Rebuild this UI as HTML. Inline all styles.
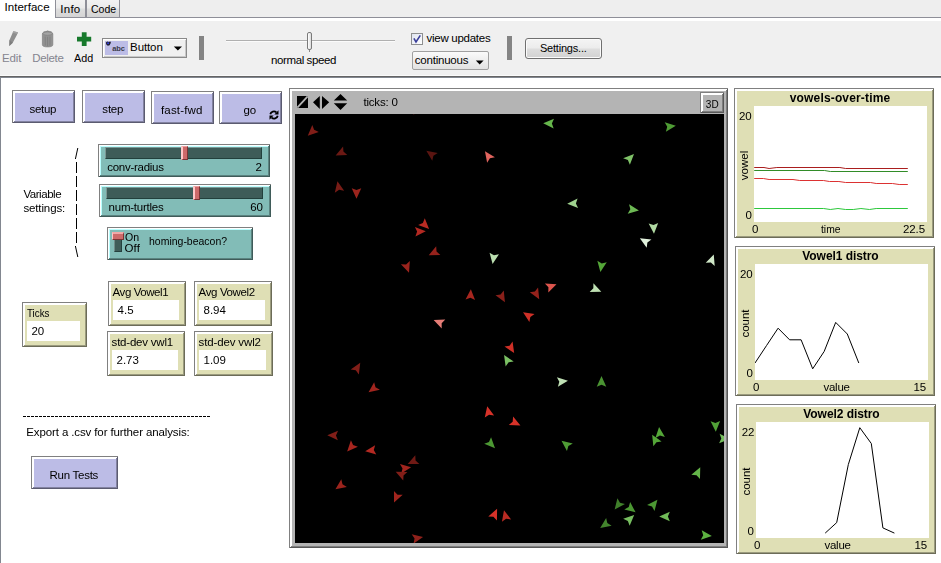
<!DOCTYPE html>
<html><head><meta charset="utf-8"><title>NetLogo</title>
<style>
html,body{margin:0;padding:0;}
body{width:941px;height:563px;overflow:hidden;background:#fff;position:relative;
 font-family:"Liberation Sans",sans-serif;font-size:11.5px;color:#000;line-height:1;}
div,span,svg{position:absolute;box-sizing:border-box;}
.t{white-space:nowrap;line-height:13px;height:13px;}
/* top chrome */
#tabbg{left:0;top:0;width:941px;height:18px;background:#eeeeee;}
#tabline{left:55px;top:17px;width:886px;height:1px;background:#8e8f98;}
#strip{left:0;top:18px;width:941px;height:3px;background:#fff;}
#tool{left:0;top:21px;width:941px;height:55px;background:#f0f0f0;}
#tl0{left:0;top:75px;width:941px;height:1px;background:#fafafa;}
#tl1{left:0;top:76px;width:941px;height:1px;background:#646464;}
#tl2{left:0;top:77px;width:941px;height:1px;background:#828790;}
#seltab{left:0;top:0;width:55px;height:21px;background:#fff;}
.tab{top:0;height:17px;border-left:1px solid #8e8f98;border-right:1px solid #8e8f98;
 background:linear-gradient(#f2f2f2 0%,#ebebeb 45%,#dddddd 55%,#d4d4d4 100%);}
#leftedge{left:0;top:78px;width:1px;height:485px;background:#828790;}
.sep{width:5px;background:#848484;}
/* generic netlogo widget */
.w{border-style:solid;border-width:0;}
.w>.g{left:0;top:0;right:0;bottom:0;border-top:1px solid #808080;border-left:1px solid #808080;}
.w>.s1{left:1px;top:1px;right:0;bottom:0;}
.w>.h1{left:1px;top:1px;right:1px;bottom:1px;}
.w>.s2{left:2px;top:2px;right:1px;bottom:1px;}
.w>.h2{left:2px;top:2px;right:2px;bottom:2px;}
.w>.f{left:3px;top:3px;right:2px;bottom:2px;}
.btn .h1,.btn .h2{background:#fff;}
.btn .s1{background:#5b5b70;} .btn .s2{background:#8383a1;} .btn .f{background:#bcbce6;}
.sld .h1{background:#fff;} .sld .h2{background:#b9ffff;}
.sld .s1{background:#3f5b59;} .sld .s2{background:#5b8380;} .sld .f{background:#82bcb7;}
.mon .h1,.mon .h2{background:#fff;}
.mon .s1{background:#6c6c58;} .mon .s2{background:#9b9b7e;} .mon .f{background:#dfdfb5;}
.vw .h1,.vw .h2{background:#fff;}
.vw .s1{background:#585858;} .vw .s2{background:#7e7e7e;} .vw .f{background:#b4b4b4;}
.lbl{text-align:center;left:0;right:0;}
.white{background:#fff;}
.bold{font-weight:bold;}
</style></head>
<body>
<div id="tabbg"></div><div id="strip"></div><div id="tool"></div><div id="tl0"></div><div id="tl1"></div><div id="tl2"></div>
<div id="seltab"></div>
<div class="tab" style="left:55px;width:31px"></div><div class="tab" style="left:86px;width:34px"></div>
<div id="tabline"></div>
<span class="t " style="left:4.50px;top:0.80px;;letter-spacing:0.039px">Interface</span>
<span class="t " style="left:60.30px;top:2.80px;;letter-spacing:0.253px">Info</span>
<span class="t " style="left:91.20px;top:2.80px;;transform:scaleX(0.9164);transform-origin:0 0">Code</span>
<svg style="left:6px;top:29px" width="16" height="20" viewBox="0 0 16 20"><path d="M7.3 2.2 L11.9 3.3 L11 5.8 L6.75 13.8 L3.3 16.9 L3.5 10.9 Z" fill="#8e8e8e"/><path d="M7.3 2.2 L11.9 3.3 L11.3 4.9 L6.7 3.7 Z" fill="#a2a2a2"/><path d="M3.5 10.9 L6.75 13.8 L3.3 16.9 Z" fill="#7e7e7e"/></svg>
<svg style="left:40px;top:29px" width="16" height="20" viewBox="0 0 16 20"><path d="M2.4 5.2 Q2.4 2.3 7.6 2.3 Q12.8 2.3 12.8 5.2 L12.8 15.8 Q12.8 17.9 7.6 17.9 Q2.4 17.9 2.4 15.8 Z" fill="#929292" stroke="#808080" stroke-width="0.7"/><ellipse cx="7.6" cy="4.6" rx="4.6" ry="1.7" fill="#a4a4a4" stroke="#7e7e7e" stroke-width="0.6"/><path d="M6.2 2.6 Q7.6 1.4 9 2.6" fill="none" stroke="#858585" stroke-width="0.9"/><path d="M5.2 7.6 L5.3 16.6 M7.6 7.8 L7.6 17 M10 7.6 L9.9 16.6" stroke="#7c7c7c" stroke-width="0.8" fill="none"/></svg>
<svg style="left:76px;top:31px" width="16" height="16" viewBox="0 0 16 16"><path d="M5.8 1.2 H10.6 V5.8 H15.2 V10.4 H10.6 V15 H5.8 V10.4 H1 V5.8 H5.8 Z" fill="#17792c"/></svg>
<span class="t " style="left:2.10px;top:52.00px;color:#85858f;letter-spacing:-0.182px">Edit</span>
<span class="t " style="left:32.20px;top:52.00px;color:#85858f;letter-spacing:-0.325px">Delete</span>
<span class="t " style="left:74.40px;top:52.00px;;transform:scaleX(0.9331);transform-origin:0 0">Add</span>
<div style="left:102px;top:38px;width:85px;height:20px;background:#f0f0f0;border:1px solid #8a8a8a;box-shadow:inset 1px 1px 0 #fff, inset -1px -1px 0 #c8c8c8"></div>
<div style="left:105px;top:41px;width:23px;height:14px;background:#bcbce6"></div>
<svg style="left:105px;top:41px" width="23" height="14" viewBox="0 0 23 14"><path d="M0.9 1.4 L2.4 0.5 L3.8 1.1 L5.4 0.5 L5.9 1.8 L4.6 4.2 L2.8 4.8 L1.3 3.4 Z" fill="#1e1e28"/><circle cx="3.1" cy="2.3" r="1.05" fill="#2a38e0"/></svg>
<span class="t " style="left:112.20px;top:42.10px;font-size:7.5px;font-weight:bold;color:#3a3a4a;letter-spacing:-0.112px">abc</span>
<span class="t " style="left:130.10px;top:40.80px;;letter-spacing:-0.108px">Button</span>
<svg style="left:173px;top:46px" width="10" height="6"><path d="M0.8 0.4 L9 0.4 L4.9 4.6 Z" fill="#000"/></svg>
<div class="sep" style="left:199px;top:36px;height:24px"></div>
<div style="left:226px;top:40px;width:169px;height:1px;background:#b0b0b0"></div>
<div style="left:226px;top:41px;width:169px;height:1px;background:#fbfbfb"></div>
<div style="left:307px;top:32px;width:5px;height:18px;border:1px solid #7a7a7a;border-radius:2px;background:linear-gradient(90deg,#fff,#dcdcdc)"></div>
<div style="left:309px;top:50px;width:1px;height:2px;background:#8a8a8a"></div>
<span class="t " style="left:271.10px;top:53.90px;;letter-spacing:-0.407px">normal speed</span>
<div style="left:411px;top:33px;width:12px;height:12px;border:1px solid #8e8f8f;background:linear-gradient(135deg,#dfe4f0,#ffffff)"></div>
<svg style="left:411px;top:33px" width="12" height="12" viewBox="0 0 12 12"><path d="M2.9 5.4 L5 9 L9.3 2.4" fill="none" stroke="#3a3f9a" stroke-width="1.6"/></svg>
<span class="t " style="left:426.50px;top:31.80px;;letter-spacing:-0.269px">view updates</span>
<div style="left:412px;top:51px;width:77px;height:19px;border:1px solid #a0a0a0;border-radius:2px;background:linear-gradient(#fafafa,#e2e2e2)"></div>
<span class="t " style="left:414.80px;top:54.00px;;letter-spacing:-0.223px">continuous</span>
<svg style="left:475px;top:60px" width="10" height="6"><path d="M0.8 0.4 L8.6 0.4 L4.7 4.4 Z" fill="#000"/></svg>
<div class="sep" style="left:507px;top:36px;height:24px"></div>
<div style="left:525px;top:38px;width:77px;height:21px;border:1px solid #707070;border-radius:3px;background:linear-gradient(#f4f4f4 0%,#ececec 48%,#dedede 52%,#d2d2d2 100%);box-shadow:inset 0 0 0 1px #fbfbfb"></div>
<span class="t " style="left:539.90px;top:42.00px;font-size:11px;;letter-spacing:-0.193px">Settings...</span>
<div id="leftedge"></div>
<div id="panel" style="left:0;top:0;width:941px;height:563px;will-change:transform">
<div class="w btn" style="left:12px;top:90px;width:63px;height:33px"><div class="g"></div><div class="s1"></div><div class="h1"></div><div class="s2"></div><div class="h2"></div><div class="f"></div><span class="t " style="left:17.55px;top:12.80px;;letter-spacing:-0.328px">setup</span></div>
<div class="w btn" style="left:82px;top:90px;width:63px;height:33px"><div class="g"></div><div class="s1"></div><div class="h1"></div><div class="s2"></div><div class="h2"></div><div class="f"></div><span class="t " style="left:20.35px;top:12.80px;;letter-spacing:-0.212px">step</span></div>
<div class="w btn" style="left:151px;top:91px;width:63px;height:33px"><div class="g"></div><div class="s1"></div><div class="h1"></div><div class="s2"></div><div class="h2"></div><div class="f"></div><span class="t " style="left:10.00px;top:12.80px;;letter-spacing:0.167px">fast-fwd</span></div>
<div class="w btn" style="left:219px;top:91px;width:63px;height:33px"><div class="g"></div><div class="s1"></div><div class="h1"></div><div class="s2"></div><div class="h2"></div><div class="f"></div><span class="t " style="left:24.60px;top:12.80px;;letter-spacing:-0.198px">go</span><svg style="left:50px;top:19px" width="10" height="10" viewBox="0 0 10 10"><path d="M1.3 4.3 A3.7 3.7 0 0 1 7.4 2.3" fill="none" stroke="#000" stroke-width="1.8"/><path d="M8.7 5.7 A3.7 3.7 0 0 1 2.6 7.7" fill="none" stroke="#000" stroke-width="1.8"/><path d="M9.5 0.3 L9.5 4.5 L5.3 4.5 Z" fill="#000"/><path d="M0.5 9.7 L0.5 5.5 L4.7 5.5 Z" fill="#000"/></svg></div>
<div class="w sld" style="left:98px;top:144px;width:172px;height:33px"><div class="g"></div><div class="s1"></div><div class="h1"></div><div class="s2"></div><div class="h2"></div><div class="f"></div><div style="left:7px;top:3px;width:157px;height:12px;background:#3e5c58;border-top:1px solid #7c9895;border-left:1px solid #7c9895;border-bottom:1px solid #22403c;border-right:1px solid #22403c"></div><div style="left:83px;top:2px;width:7px;height:14px;background:#cd6a6a;border-left:2px solid #ffc8c8;border-top:1px solid #f0a0a0;border-right:1px solid #7a3434;border-bottom:1px solid #7a3434"></div><span class="t " style="left:9.20px;top:16.80px;;letter-spacing:-0.268px">conv-radius</span><span class="t " style="left:157.50px;top:16.80px;;letter-spacing:0.094px">2</span></div>
<div class="w sld" style="left:99px;top:184px;width:172px;height:33px"><div class="g"></div><div class="s1"></div><div class="h1"></div><div class="s2"></div><div class="h2"></div><div class="f"></div><div style="left:7px;top:3px;width:157px;height:12px;background:#3e5c58;border-top:1px solid #7c9895;border-left:1px solid #7c9895;border-bottom:1px solid #22403c;border-right:1px solid #22403c"></div><div style="left:94px;top:2px;width:7px;height:14px;background:#cd6a6a;border-left:2px solid #ffc8c8;border-top:1px solid #f0a0a0;border-right:1px solid #7a3434;border-bottom:1px solid #7a3434"></div><span class="t " style="left:9.60px;top:16.80px;;letter-spacing:-0.239px">num-turtles</span><span class="t " style="left:151.30px;top:16.80px;;letter-spacing:-0.098px">60</span></div>
<div class="w sld" style="left:107px;top:227px;width:146px;height:33px"><div class="g"></div><div class="s1"></div><div class="h1"></div><div class="s2"></div><div class="h2"></div><div class="f"></div><div style="left:7px;top:12px;width:8px;height:13px;background:#3e5c58;border-left:1px solid #6f8c89;border-right:1px solid #24403d;border-bottom:1px solid #24403d"></div><div style="left:5px;top:5px;width:12px;height:8px;background:#cd6a6a;border-left:1px solid #ffc8c8;border-top:2px solid #f0a8a8;border-right:1px solid #7a3434;border-bottom:1px solid #7a3434"></div><span class="t " style="left:17.50px;top:3.80px;;transform:scaleX(0.9189);transform-origin:0 0">On</span><span class="t " style="left:17.50px;top:14.80px;;letter-spacing:0.153px">Off</span><span class="t " style="left:42.20px;top:7.80px;;transform:scaleX(0.9116);transform-origin:0 0">homing-beacon?</span></div>
<svg style="left:70px;top:145px" width="14" height="116"><path d="M7.8 3 L5.4 14 M6.5 17 V28 M6.5 31 V42 M6.5 45 V56 M6.5 59 V70 M6.5 73 V84 M6.5 87 V98 M5.4 101 L7.8 112" stroke="#000" stroke-width="1" fill="none"/></svg>
<span class="t " style="left:23.40px;top:187.80px;;letter-spacing:-0.443px">Variable</span>
<span class="t " style="left:23.40px;top:201.80px;;letter-spacing:-0.125px">settings:</span>
<div class="w mon" style="left:22px;top:302px;width:65px;height:45px"><div class="g"></div><div class="s1"></div><div class="h1"></div><div class="s2"></div><div class="h2"></div><div class="f"></div><span class="t " style="left:4.60px;top:4.80px;;transform:scaleX(0.8521);transform-origin:0 0">Ticks</span><div class="white" style="left:5px;top:19px;width:53px;height:20px"></div><span class="t " style="left:9.50px;top:22.80px;;letter-spacing:-0.198px">20</span></div>
<div class="w mon" style="left:108px;top:281px;width:78px;height:45px"><div class="g"></div><div class="s1"></div><div class="h1"></div><div class="s2"></div><div class="h2"></div><div class="f"></div><span class="t " style="left:4.60px;top:4.80px;;letter-spacing:-0.439px">Avg Vowel1</span><div class="white" style="left:5px;top:19px;width:66px;height:20px"></div><span class="t " style="left:9.50px;top:22.80px;;letter-spacing:0.100px">4.5</span></div>
<div class="w mon" style="left:194px;top:281px;width:78px;height:45px"><div class="g"></div><div class="s1"></div><div class="h1"></div><div class="s2"></div><div class="h2"></div><div class="f"></div><span class="t " style="left:4.60px;top:4.80px;;letter-spacing:-0.379px">Avg Vowel2</span><div class="white" style="left:5px;top:19px;width:66px;height:20px"></div><span class="t " style="left:9.50px;top:22.80px;;letter-spacing:0.002px">8.94</span></div>
<div class="w mon" style="left:107px;top:331px;width:78px;height:45px"><div class="g"></div><div class="s1"></div><div class="h1"></div><div class="s2"></div><div class="h2"></div><div class="f"></div><span class="t " style="left:4.60px;top:4.80px;;letter-spacing:-0.210px">std-dev vwl1</span><div class="white" style="left:5px;top:19px;width:66px;height:20px"></div><span class="t " style="left:9.50px;top:22.80px;;letter-spacing:0.002px">2.73</span></div>
<div class="w mon" style="left:194px;top:331px;width:79px;height:45px"><div class="g"></div><div class="s1"></div><div class="h1"></div><div class="s2"></div><div class="h2"></div><div class="f"></div><span class="t " style="left:4.60px;top:4.80px;;letter-spacing:-0.143px">std-dev vwl2</span><div class="white" style="left:5px;top:19px;width:67px;height:20px"></div><span class="t " style="left:9.50px;top:22.80px;;letter-spacing:0.002px">1.09</span></div>
<div style="left:23px;top:416px;width:187px;height:1px;background:repeating-linear-gradient(90deg,#000 0,#000 3px,#fff 3px,#fff 4px)"></div>
<span class="t " style="left:26.30px;top:425.80px;;letter-spacing:-0.119px">Export a .csv for further analysis:</span>
<div class="w btn" style="left:31px;top:456px;width:87px;height:33px"><div class="g"></div><div class="s1"></div><div class="h1"></div><div class="s2"></div><div class="h2"></div><div class="f"></div><span class="t " style="left:18.45px;top:12.80px;;letter-spacing:-0.249px">Run Tests</span></div>
<div class="w vw" style="left:289px;top:88px;width:439px;height:460px"><div class="g"></div><div class="s1"></div><div class="h1"></div><div class="s2"></div><div class="h2"></div><div class="f"></div><svg style="left:3px;top:3px" width="429" height="23"><rect x="5" y="5" width="11" height="12" fill="#000"/><path d="M5.3 16.7 L15.7 5.3" stroke="#b4b4b4" stroke-width="1.8"/><path d="M21 11.3 L27.8 5 V18 Z M37.2 11.3 L30 5 V18 Z" fill="#000"/><path d="M48.5 3 L55.2 9.6 H41.8 Z M48.5 19 L55.2 12.2 H41.8 Z" fill="#000"/></svg><span class="t " style="left:74.40px;top:7.80px;;letter-spacing:-0.175px">ticks: 0</span><div style="left:6px;top:26px;width:429px;height:429px;background:#000;overflow:hidden"><svg style="left:0;top:0" width="429" height="429"><polygon points="12.77,21.73 23.79,17.97 19.11,15.82 17.29,11.00" fill="rgb(129,30,24)"/>
<polygon points="40.64,41.40 52.27,41.03 48.43,37.60 48.09,32.46" fill="rgb(107,25,20)"/>
<polygon points="131.30,36.84 137.26,46.83 138.40,41.81 142.73,39.03" fill="rgb(90,21,17)"/>
<polygon points="42.45,67.35 39.80,78.68 44.10,75.86 49.15,76.86" fill="rgb(120,28,22)"/>
<polygon points="61.50,84.78 66.27,74.16 61.50,76.11 56.73,74.16" fill="rgb(155,36,29)"/>
<polygon points="134.09,115.02 129.77,104.21 127.86,109.00 123.14,111.07" fill="rgb(185,43,35)"/>
<polygon points="130.77,117.13 119.92,112.93 122.11,117.58 120.42,122.45" fill="rgb(179,41,34)"/>
<polygon points="133.74,141.30 145.37,140.93 141.53,137.50 141.19,132.36" fill="rgb(149,34,28)"/>
<polygon points="248.23,9.25 258.67,14.39 256.89,9.56 259.00,4.86" fill="rgb(102,182,76)"/>
<polygon points="189.94,37.20 192.13,48.63 194.91,44.30 199.93,43.16" fill="rgb(224,100,94)"/>
<polygon points="272.23,89.87 283.08,94.07 280.89,89.42 282.58,84.55" fill="rgb(159,209,142)"/>
<polygon points="197.59,149.89 203.96,140.15 198.95,141.33 194.55,138.66" fill="rgb(186,222,175)"/>
<polygon points="380.82,11.64 369.71,8.20 372.22,12.69 370.87,17.66" fill="rgb(79,156,53)"/>
<polygon points="339.00,40.00 328.13,44.13 332.88,46.12 334.87,50.87" fill="rgb(127,194,104)"/>
<polygon points="343.91,96.39 334.06,90.19 335.33,95.18 332.73,99.63" fill="rgb(109,185,84)"/>
<polygon points="358.97,119.77 363.17,108.92 358.52,111.11 353.65,109.42" fill="rgb(176,217,162)"/>
<polygon points="344.87,124.26 351.68,133.70 352.38,128.59 356.45,125.44" fill="rgb(225,241,220)"/>
<polygon points="114.02,158.65 114.87,147.04 111.06,150.51 105.91,150.30" fill="rgb(155,36,29)"/>
<polygon points="138.64,206.05 146.70,214.45 146.67,209.30 150.27,205.61" fill="rgb(229,125,119)"/>
<polygon points="65.25,248.83 55.69,255.48 60.78,256.26 63.86,260.39" fill="rgb(129,30,24)"/>
<polygon points="73.55,278.36 84.90,275.78 80.47,273.14 79.16,268.16" fill="rgb(161,37,30)"/>
<polygon points="175.87,175.13 170.55,185.48 175.42,183.79 180.07,185.98" fill="rgb(167,38,31)"/>
<polygon points="209.94,188.13 208.76,176.55 205.61,180.62 200.50,181.32" fill="rgb(137,32,26)"/>
<polygon points="244.24,185.13 243.06,173.55 239.91,177.62 234.80,178.32" fill="rgb(149,34,28)"/>
<polygon points="261.51,170.16 249.89,169.52 253.42,173.27 253.30,178.42" fill="rgb(221,85,77)"/>
<polygon points="228.06,198.25 234.37,208.03 235.33,202.97 239.56,200.03" fill="rgb(206,48,39)"/>
<polygon points="219.15,239.10 217.57,227.57 214.56,231.75 209.48,232.62" fill="rgb(206,48,39)"/>
<polygon points="209.05,241.00 210.63,252.53 213.64,248.35 218.72,247.48" fill="rgb(122,192,99)"/>
<polygon points="418.76,140.43 410.73,148.84 415.87,148.60 419.71,152.03" fill="rgb(208,232,200)"/>
<polygon points="305.39,157.99 311.76,148.25 306.75,149.43 302.35,146.76" fill="rgb(84,166,56)"/>
<polygon points="306.31,177.67 298.40,169.13 298.34,174.28 294.68,177.90" fill="rgb(190,224,178)"/>
<polygon points="32.32,321.28 42.86,326.23 40.99,321.43 43.02,316.70" fill="rgb(129,30,24)"/>
<polygon points="52.17,337.38 62.90,332.86 58.08,331.04 55.93,326.36" fill="rgb(167,38,31)"/>
<polygon points="70.18,337.16 81.29,340.60 78.78,336.11 80.13,331.14" fill="rgb(179,41,34)"/>
<polygon points="112.69,350.09 124.32,349.92 120.54,346.43 120.29,341.28" fill="rgb(111,26,21)"/>
<polygon points="272.94,266.86 261.88,263.23 264.32,267.77 262.88,272.71" fill="rgb(191,224,180)"/>
<polygon points="192.23,292.18 189.77,303.55 194.03,300.65 199.10,301.57" fill="rgb(215,50,41)"/>
<polygon points="225.41,311.61 218.11,302.55 217.68,307.68 213.78,311.04" fill="rgb(215,50,41)"/>
<polygon points="200.02,334.19 196.07,323.24 194.00,327.96 189.21,329.87" fill="rgb(76,152,51)"/>
<polygon points="266.52,326.64 271.95,336.94 273.35,331.98 277.82,329.42" fill="rgb(79,156,53)"/>
<polygon points="306.50,262.12 301.73,272.74 306.50,270.79 311.27,272.74" fill="rgb(74,147,50)"/>
<polygon points="357.16,320.67 358.34,332.25 361.49,328.18 366.60,327.48" fill="rgb(84,166,56)"/>
<polygon points="364.06,312.96 360.43,324.02 364.97,321.58 369.91,323.02" fill="rgb(84,166,56)"/>
<polygon points="420.81,317.77 425.11,306.96 420.43,309.11 415.58,307.37" fill="rgb(81,161,55)"/>
<polygon points="434.97,324.97 424.62,319.65 426.31,324.52 424.12,329.17" fill="rgb(117,189,93)"/>
<polygon points="116.11,353.31 104.93,350.07 107.53,354.52 106.26,359.51" fill="rgb(161,37,30)"/>
<polygon points="100.71,357.65 108.24,366.53 108.53,361.38 112.35,357.92" fill="rgb(129,30,24)"/>
<polygon points="40.44,375.21 51.85,372.93 47.49,370.18 46.31,365.16" fill="rgb(155,36,29)"/>
<polygon points="99.02,388.57 107.69,380.81 102.55,380.65 98.98,376.93" fill="rgb(161,37,30)"/>
<polygon points="128.05,422.95 116.72,420.30 119.54,424.60 118.54,429.65" fill="rgb(143,33,27)"/>
<polygon points="128.05,-6.05 116.72,-8.70 119.54,-4.40 118.54,0.65" fill="rgb(143,33,27)"/>
<polygon points="202.09,394.79 193.28,402.39 198.43,402.64 201.92,406.42" fill="rgb(215,50,41)"/>
<polygon points="208.99,396.33 206.93,407.79 211.08,404.74 216.18,405.48" fill="rgb(185,43,35)"/>
<polygon points="405.25,353.31 396.37,360.84 401.52,361.13 404.98,364.95" fill="rgb(100,181,73)"/>
<polygon points="319.64,395.48 329.94,390.05 324.98,388.65 322.42,384.18" fill="rgb(64,128,43)"/>
<polygon points="340.58,398.36 335.15,388.06 333.75,393.02 329.28,395.58" fill="rgb(76,152,51)"/>
<polygon points="339.18,401.07 328.16,404.83 332.84,406.98 334.66,411.80" fill="rgb(119,190,96)"/>
<polygon points="305.20,414.06 316.63,411.87 312.30,409.09 311.16,404.07" fill="rgb(67,133,45)"/>
<polygon points="362.42,385.67 352.07,390.99 357.01,392.44 359.52,396.94" fill="rgb(76,152,51)"/>
<polygon points="364.22,402.40 374.84,407.17 372.89,402.40 374.84,397.63" fill="rgb(113,187,88)"/>
<polygon points="416.85,421.98 406.73,416.22 408.22,421.15 405.82,425.71" fill="rgb(93,178,65)"/></svg></div></div>
<div class="w vw" style="left:700px;top:92px;width:24px;height:21px"><div class="g"></div><div class="s1"></div><div class="h1"></div><div class="s2"></div><div class="h2"></div><div class="f"></div><span class="t " style="left:5.75px;top:5.80px;font-size:10px;;letter-spacing:0.252px">3D</span></div>
<div class="w mon" style="left:734px;top:88px;width:200px;height:150px"><div class="g"></div><div class="s1"></div><div class="h1"></div><div class="s2"></div><div class="h2"></div><div class="f"></div><span class="t " style="left:55.80px;top:4.20px;font-weight:bold;font-size:12px;;letter-spacing:0.153px">vowels-over-time</span><div class="white" style="left:20px;top:18px;width:173px;height:116px"></div><svg style="left:20px;top:18px" width="173" height="116"><polyline fill="none" stroke="#aa1e1e" stroke-width="1" points="0.2,61.5 10.0,61.5 15.1,62.5 22.8,61.5 85.9,61.5 91.6,62.5 153.8,62.5"/>
<polyline fill="none" stroke="#328c28" stroke-width="1" points="0.2,64.5 70.6,64.5 76.3,65.5 153.8,65.5"/>
<polyline fill="none" stroke="#dc3232" stroke-width="1" points="0.2,72.5 9.4,72.5 15.1,73.5 39.0,73.5 45.7,74.5 69.6,74.5 75.4,75.5 84.9,75.5 91.6,76.5 116.5,76.5 122.2,77.5 138.5,77.5 145.2,78.5 153.8,78.5"/>
<polyline fill="none" stroke="#2dc83c" stroke-width="1" points="0.2,102.5 69.6,102.5 76.3,103.5 84.0,102.5 91.6,103.5 99.3,103.5 106.9,102.5 115.5,103.5 122.2,102.5 153.8,102.5"/></svg><span class="t " style="left:5.10px;top:21.80px;;letter-spacing:-0.198px">20</span><span class="t " style="left:11.49px;top:120.60px;">0</span><span class="t" style="left:-19.60px;top:70.50px;width:60px;text-align:center;transform:rotate(-90deg)">vowel</span><span class="t " style="left:17.90px;top:134.80px;">0</span><span class="t " style="left:87.15px;top:134.80px;;transform:scaleX(0.8972);transform-origin:0 0">time</span><span class="t " style="left:169.00px;top:134.80px;;letter-spacing:-0.098px">22.5</span></div>
<div class="w mon" style="left:735px;top:246px;width:200px;height:150px"><div class="g"></div><div class="s1"></div><div class="h1"></div><div class="s2"></div><div class="h2"></div><div class="f"></div><span class="t " style="left:67.30px;top:4.20px;font-weight:bold;font-size:12px;;letter-spacing:-0.065px">Vowel1 distro</span><div class="white" style="left:20px;top:18px;width:173px;height:116px"></div><svg style="left:20px;top:18px" width="173" height="116"><polyline fill="none" stroke="#000" stroke-width="1" points="0.0,99.0 11.5,81.6 23.1,64.2 34.6,75.8 46.1,75.8 57.7,104.8 69.2,87.4 80.7,58.4 92.3,70.0 103.8,99.0"/></svg><span class="t " style="left:5.10px;top:21.80px;;letter-spacing:-0.198px">20</span><span class="t " style="left:11.49px;top:120.60px;">0</span><span class="t" style="left:-19.60px;top:70.50px;width:60px;text-align:center;transform:rotate(-90deg)">count</span><span class="t " style="left:17.90px;top:134.80px;">0</span><span class="t " style="left:88.45px;top:134.80px;;letter-spacing:-0.240px">value</span><span class="t " style="left:178.40px;top:134.80px;;letter-spacing:-0.098px">15</span></div>
<div class="w mon" style="left:736px;top:404px;width:200px;height:150px"><div class="g"></div><div class="s1"></div><div class="h1"></div><div class="s2"></div><div class="h2"></div><div class="f"></div><span class="t " style="left:67.30px;top:4.20px;font-weight:bold;font-size:12px;;letter-spacing:-0.065px">Vowel2 distro</span><div class="white" style="left:20px;top:18px;width:173px;height:116px"></div><svg style="left:20px;top:18px" width="173" height="116"><polyline fill="none" stroke="#000" stroke-width="1" points="69.2,111.1 80.7,100.6 92.3,42.6 103.8,5.7 115.3,21.5 126.9,105.9 138.4,111.1"/></svg><span class="t " style="left:5.80px;top:21.80px;;letter-spacing:-0.198px">22</span><span class="t " style="left:11.49px;top:120.60px;">0</span><span class="t" style="left:-19.60px;top:70.50px;width:60px;text-align:center;transform:rotate(-90deg)">count</span><span class="t " style="left:17.90px;top:134.80px;">0</span><span class="t " style="left:88.45px;top:134.80px;;letter-spacing:-0.240px">value</span><span class="t " style="left:178.40px;top:134.80px;;letter-spacing:-0.098px">15</span></div>
</div>
</body></html>
